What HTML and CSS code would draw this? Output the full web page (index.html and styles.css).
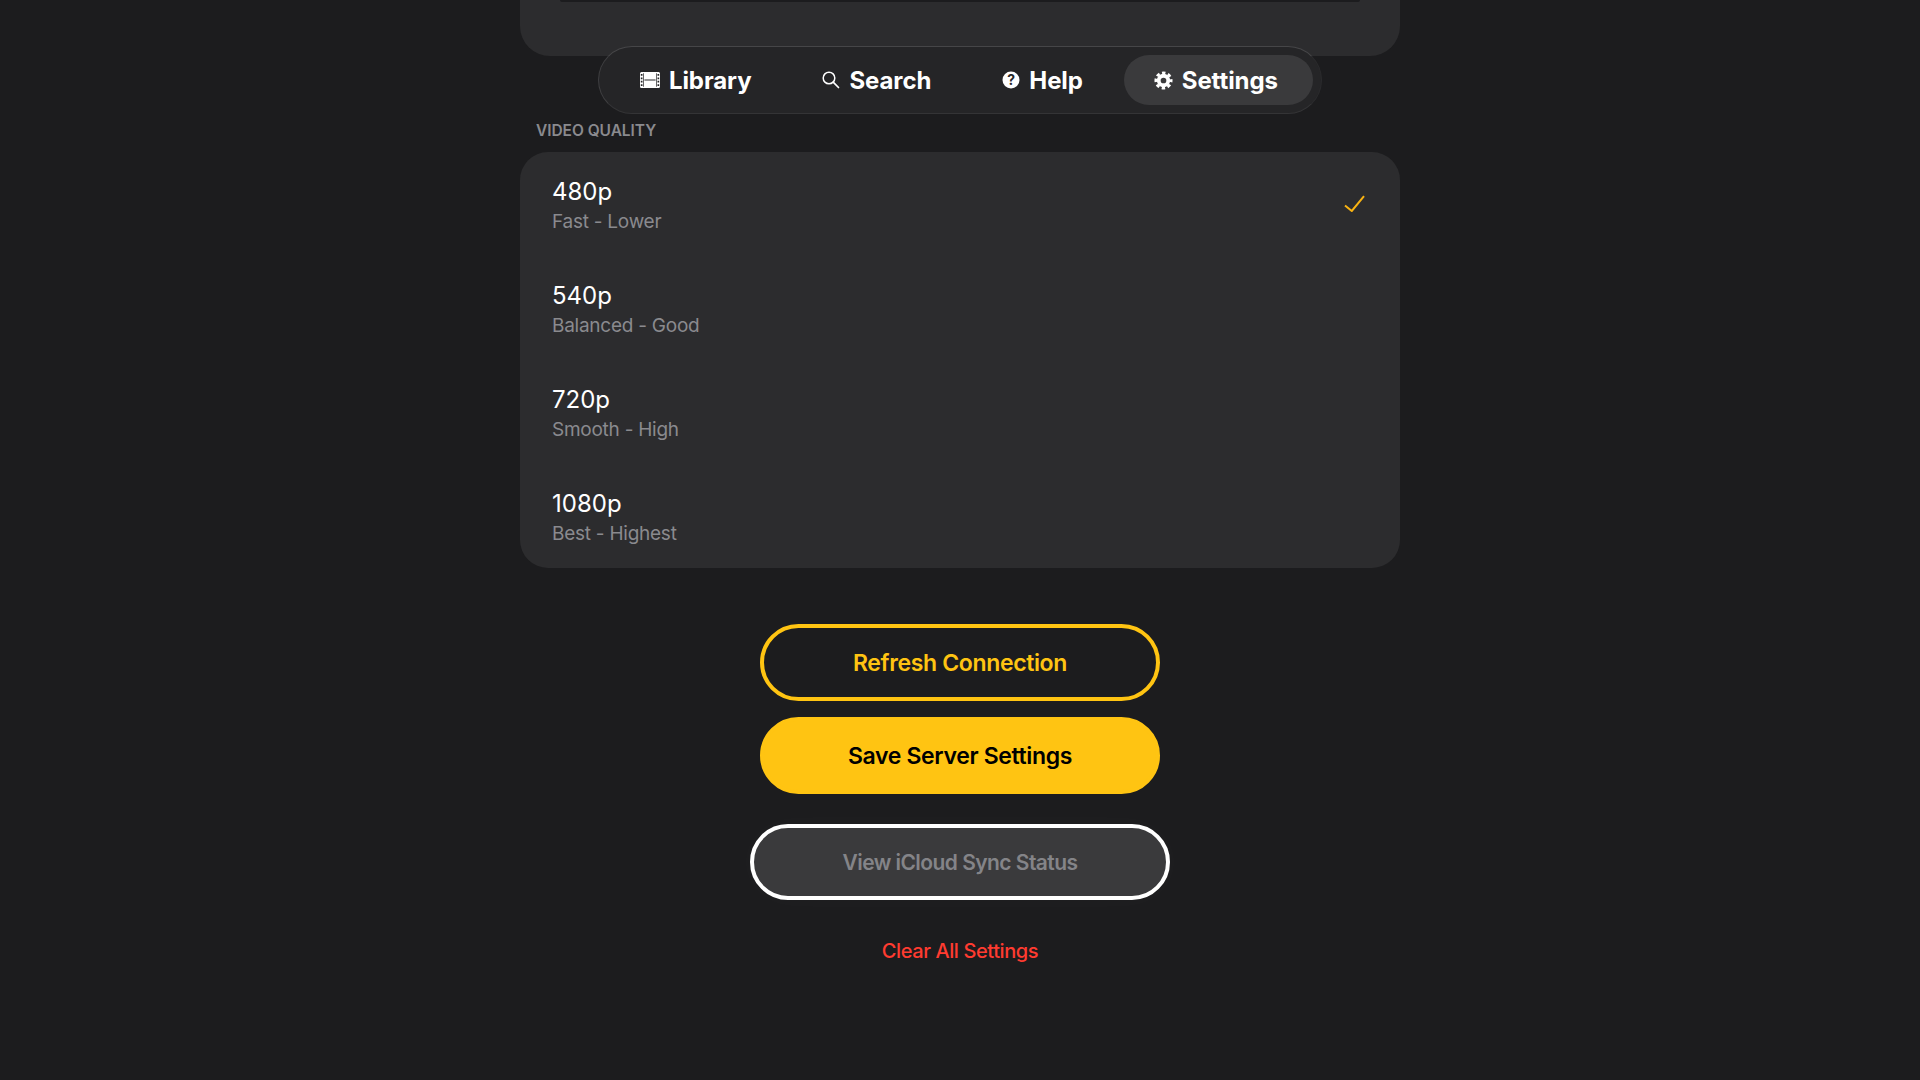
FILE: index.html
```html
<!DOCTYPE html>
<html lang="en">
<head>
<meta charset="utf-8">
<title>Settings</title>
<link rel="stylesheet" href="styles.css">
</head>
<body>
<div class="page">
  <div class="top-card"><div class="top-inner"></div></div>
  <nav class="nav">
    <a class="nav-item">
      <svg class="nav-icon" width="20" height="16" viewBox="0 0 20 16"><path fill="#fff" fill-rule="evenodd" d="M1.500 0h17A1.500 1.500 0 0 1 20 1.500v13a1.500 1.500 0 0 1-1.500 1.500h-17A1.500 1.500 0 0 1 0 14.500v-13A1.500 1.500 0 0 1 1.500 0ZM.8 2v1.800h1.700V2ZM.8 5.400v1.800h1.700V5.400ZM.8 8.800v1.800h1.700V8.800ZM.8 12.200v1.800h1.700v-1.800ZM17.500 2v1.800h1.700V2ZM17.500 5.400v1.800h1.700V5.400ZM17.500 8.800v1.800h1.700V8.800ZM17.500 12.200v1.800h1.700v-1.800ZM3.200 1.200v13.600h.7V1.200ZM16.100 1.200v13.600h.7V1.200ZM4.400 7.400v1.200h11.200V7.400Z"/></svg>
      <span>Library</span>
    </a>
    <a class="nav-item">
      <svg class="nav-icon" width="18" height="18" viewBox="0 0 18 18"><circle cx="7" cy="7" r="5.800" fill="none" stroke="#fff" stroke-width="1.500"/><path d="M11.200 11.200 16.500 16.500" stroke="#fff" stroke-width="1.700" stroke-linecap="round"/></svg>
      <span>Search</span>
    </a>
    <a class="nav-item">
      <svg class="nav-icon" width="18" height="18" viewBox="0 0 18 18"><circle cx="9" cy="9" r="8.500" fill="#fff"/><text x="9" y="13.800" text-anchor="middle" class="help-mark">?</text></svg>
      <span>Help</span>
    </a>
    <a class="nav-item active">
      <svg class="nav-icon" width="19" height="19" viewBox="0 0 20 20"><circle cx="10" cy="10" r="5" fill="none" stroke="#fff" stroke-width="4"/><circle cx="10" cy="10" r="8" fill="none" stroke="#fff" stroke-width="3" stroke-dasharray="3.600 2.683" stroke-dashoffset="1.800"/></svg>
      <span>Settings</span>
    </a>
  </nav>
  <div class="section-label">VIDEO QUALITY</div>
  <section class="quality-card">
    <div class="row">
      <div><div class="row-title">480p</div><div class="row-sub">Fast - Lower</div></div>
      <svg class="check" width="21" height="17" viewBox="0 0 21 17"><path d="M1 10.500 7.800 16 20 1.200" fill="none" stroke="#f9b312" stroke-width="2"/></svg>
    </div>
    <div class="row"><div><div class="row-title">540p</div><div class="row-sub">Balanced - Good</div></div></div>
    <div class="row"><div><div class="row-title">720p</div><div class="row-sub">Smooth - High</div></div></div>
    <div class="row"><div><div class="row-title">1080p</div><div class="row-sub">Best - Highest</div></div></div>
  </section>
  <div class="actions">
    <button class="btn btn-outline">Refresh Connection</button>
    <button class="btn btn-primary">Save Server Settings</button>
    <button class="btn btn-focus">View iCloud Sync Status</button>
    <button class="btn-link">Clear All Settings</button>
  </div>
</div>
</body>
</html>
```
FILE: styles.css
```css
* { box-sizing: border-box; }
html, body { margin: 0; height: 100%; background: #1c1c1e; overflow: hidden; }
body { font-family: Inter, "Liberation Sans", sans-serif; color: #fff; }
.page { width: 880px; margin: 0 auto; display: flex; flex-direction: column; }
.top-card { height: 56px; background: #2c2c2e; border-radius: 0 0 30px 30px; padding: 0 40px; }
.top-inner { height: 2px; background: #1c1c1e; border-radius: 0 0 12px 12px; }
.nav { position: relative; align-self: center; margin-top: -10px; width: 724px; height: 68px; padding: 0 0 0 11px; display: flex; align-items: center; gap: 6px; background: #252527; border-radius: 34px; border: 1px solid #343436; border-top-color: #464648; border-left-color: #3f3f41; border-right-color: #2b2b2d; }
.nav-item { height: 50px; padding: 0 35px 0 30px; display: flex; align-items: center; gap: 9px; border-radius: 25px; font-size: 24px; font-weight: 700; letter-spacing: -0.1px; color: #fff; }
.nav-item.active { background: #3a3a3c; }
.nav-icon { flex: none; }
.help-mark { font: 700 14px Inter, sans-serif; fill: #252527; }
.section-label { height: 38px; padding: 7px 0 0 16px; font-size: 15.500px; line-height: 20px; font-weight: 600; letter-spacing: -0.05px; color: #8a8a8e; }
.quality-card { height: 416px; background: #2c2c2e; border-radius: 28px; display: flex; flex-direction: column; }
.row { height: 104px; padding: 3px 35px 0 32px; display: flex; align-items: center; justify-content: space-between; }
.row-title { font-size: 24px; line-height: 30px; font-weight: 400; color: #fff; }
.row-sub { font-size: 19px; line-height: 26px; margin-top: 2px; letter-spacing: -0.25px; color: #8a8a8e; }
.check { margin-top: -5px; }
.actions { display: flex; flex-direction: column; align-items: center; padding-top: 56px; }
.btn { width: 400px; height: 77px; border-radius: 39px; font: 600 23px Inter, sans-serif; letter-spacing: -0.35px; border: 4px solid transparent; }
.btn-outline { background: transparent; border-color: #ffc412; color: #ffc412; }
.btn-primary { margin-top: 16px; background: #ffc412; border-color: #ffc412; color: #000; }
.btn-focus { width: 420px; height: 76px; margin-top: 30px; background: #3a3a3c; border-color: #fff; color: #848488; font-size: 21px; letter-spacing: -0.55px; box-shadow: 0 0 30px rgba(255,255,255,.025); }
.btn-link { margin-top: 36px; padding: 0; height: 30px; background: none; border: 0; font: 500 20px Inter, sans-serif; letter-spacing: -0.4px; color: #ff3b30; }
```
